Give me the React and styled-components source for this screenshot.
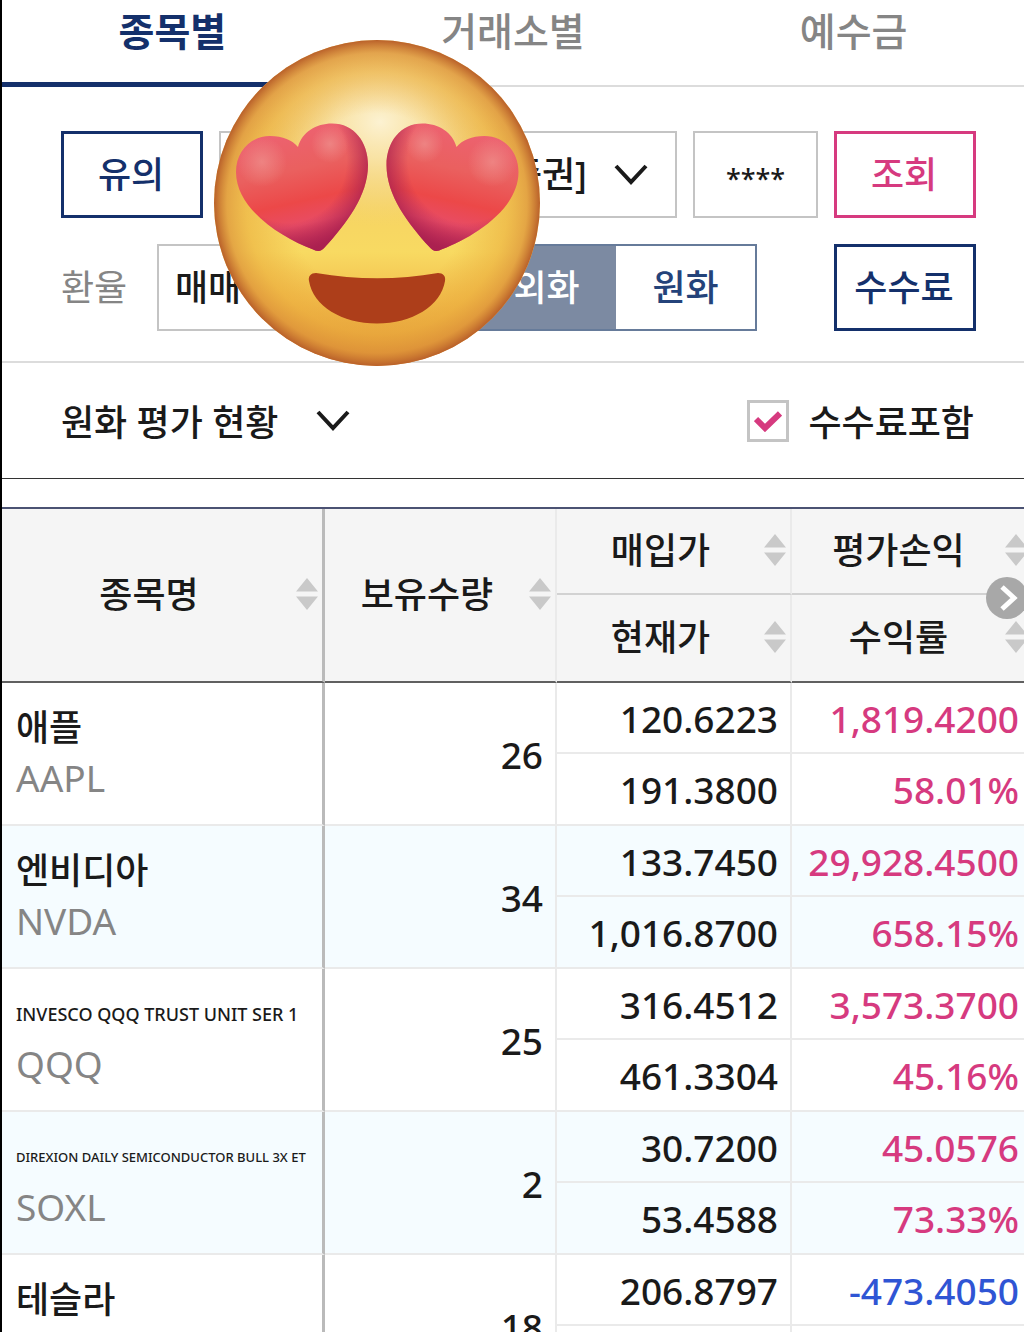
import React, { useState } from "react";
import styled, { createGlobalStyle } from "styled-components";

const navy = "#14306b";
const pink = "#d63a7f";
const blue = "#2f55d4";
const ink = "#1a1a1a";
const muted = "#858585";
const boxLine = "#c4c4c4";
const cellLine = "#eaeaea";

const GlobalStyle = createGlobalStyle`
  *, *::before, *::after { box-sizing: border-box; }
  body {
    margin: 0;
    background: #fff;
  }
  body, button, input, select {
    font-family: "Noto Sans", "Noto Sans CJK KR", sans-serif;
    font-size: 36px;
    font-weight: 500;
    color: ${ink};
  }
`;

const Page = styled.main`
  position: relative;
  height: 100vh;
  overflow: hidden;
  border-left: 2px solid #000;
`;

const Tabs = styled.nav`
  display: grid;
  grid-template-columns: repeat(3, 1fr);
  height: 87px;
  box-shadow: inset 0 -2px #dcdcdc;
`;

const Tab = styled.a`
  padding-top: 4px;
  line-height: 54px;
  text-align: center;
  text-decoration: none;
  font-size: 39px;
  font-weight: ${(p) => (p.$active ? 700 : 500)};
  color: ${(p) => (p.$active ? navy : muted)};
  border-bottom: ${(p) => (p.$active ? `5px solid ${navy}` : "0")};
`;

const Filters = styled.section`
  display: flex;
  flex-direction: column;
  gap: 26px;
  padding: 44px 48px 30px 59px;
  border-bottom: 2px solid #dcdcdc;
`;

const FilterRow = styled.div`
  display: flex;
  align-items: center;
  gap: 16px;
  height: 87px;
`;

const BoxButton = styled.button`
  width: 142px;
  height: 100%;
  padding: 0 2px 4px 0;
  background: #fff;
  border: 3px solid ${(p) => p.$color};
  color: ${(p) => p.$color};
`;

const SelectWrap = styled.div`
  display: grid;
  align-items: center;
  height: 100%;
  flex: ${(p) => (p.$grow ? "1" : "0 0 302px")};

  > * { grid-area: 1 / 1; }
  > svg { justify-self: end; margin-right: 29px; pointer-events: none; }
`;

const Select = styled.select`
  appearance: none;
  width: 100%;
  height: 100%;
  padding: 0 88px 0 16px;
  background: #fff;
  border: 2px solid ${boxLine};
  border-radius: 0;
  text-align-last: ${(p) => (p.$end ? "right" : "left")};
`;

const PinInput = styled.input`
  width: 125px;
  height: 100%;
  padding: 8px 0 0;
  text-align: center;
  font-size: 27px;
  background: #fff;
  border: 2px solid ${boxLine};
`;

const RateLabel = styled.label`
  width: 80px;
  padding-bottom: 4px;
  font-weight: 400;
  color: ${muted};
`;

const Toggle = styled.div`
  display: flex;
  height: 100%;
  margin-right: auto;
  border: 2px solid #667b9a;
`;

const ToggleButton = styled.button`
  width: 139px;
  padding: 0 0 4px;
  border: 0;
  background: ${(p) => (p.$on ? "#7c8aa2" : "#fff")};
  color: ${(p) => (p.$on ? "#fff" : "#24437a")};
`;

const Summary = styled.section`
  display: flex;
  align-items: center;
  justify-content: space-between;
  height: 116px;
  padding: 0 50px 0 59px;
  border-bottom: 1px solid #333;
`;

const SummaryButton = styled.button`
  display: flex;
  align-items: center;
  gap: 38px;
  padding: 0;
  border: 0;
  background: none;
`;

const CheckLabel = styled.label`
  display: flex;
  align-items: center;
  gap: 19px;
`;

const CheckBox = styled.span`
  display: grid;
  place-items: center;

  > * { grid-area: 1 / 1; }
  > svg { pointer-events: none; }

  input {
    appearance: none;
    width: 42px;
    height: 42px;
    margin: 0;
    background: #fff;
    border: 3px solid ${boxLine};
  }
`;

const Holdings = styled.section`
  position: relative;
  margin-top: 28px;
`;

const TableScroll = styled.div`
  overflow-x: auto;
  overflow-y: hidden;
  scrollbar-width: none;
  border-top: 2px solid #4b5273;
`;

const Table = styled.table`
  width: 100%;
  min-width: 1031px;
  table-layout: fixed;
  border-collapse: separate;
  border-spacing: 0;
`;

const Col = styled.col`
  width: ${(p) => p.$width};
`;

const HeadCell = styled.th`
  height: ${(p) => (p.rowSpan === 2 ? "174px" : p.$lower ? "88px" : "86px")};
  padding: 0;
  font-weight: 500;
  background: #f5f5f5;
  border-right: ${(p) => (p.$fixed ? "3px solid #bababa" : `2px solid ${cellLine}`)};
  border-bottom: ${(p) => (p.rowSpan === 2 || p.$lower ? "2px solid #606060" : "2px solid #d2d2d2")};
`;

const SortButton = styled.button`
  display: flex;
  align-items: center;
  width: 100%;
  padding: 0 4px 2px 0;
  border: 0;
  background: none;

  span {
    flex: 1;
    padding-bottom: 4px;
  }
`;

const Cell = styled.td`
  height: ${(p) => (p.rowSpan === 2 ? "143px" : p.$lower ? "72px" : "71px")};
  padding: 2px 12px 0 0;
  text-align: right;
  font-size: 37px;
  line-height: 52px;
  white-space: nowrap;
  color: ${(p) => p.$color || ink};
  background: ${(p) => (p.$tint ? "#f5fcff" : "#fff")};
  border-right: 2px solid ${cellLine};
  border-bottom: 2px solid ${cellLine};
`;

const NameCell = styled(Cell)`
  padding: 16px 0 0 14px;
  text-align: left;
  vertical-align: top;
  border-right: 3px solid #bababa;
`;

const StockName = styled.div`
  height: 58px;
  line-height: 58px;
  font-size: ${(p) => p.$size}px;
`;

const Ticker = styled.div`
  line-height: 42px;
  font-weight: 400;
  color: ${muted};
`;

const NextButton = styled.button`
  position: absolute;
  top: 70px;
  right: -4px;
  width: 42px;
  height: 42px;
  padding: 0;
  border: 0;
  border-radius: 50%;
  background: #a8a8a8;

  svg { display: block; }
`;

const Sticker = styled.svg`
  position: absolute;
  left: 212px;
  top: 40px;
  width: 326px;
  height: 326px;
`;

const Chevron = () => (
  <svg width="34" height="22" viewBox="0 0 34 22" fill="none" aria-hidden="true">
    <path d="M2 2 17 18 32 2" stroke={ink} strokeWidth="4" />
  </svg>
);

const SortIcon = () => (
  <svg width="22" height="32" viewBox="0 0 22 32" fill="#c9c9c9" aria-hidden="true">
    <path d="M11 0 22 13.5H0ZM11 32 0 18.5H22Z" />
  </svg>
);

const HEART =
  "M298 147C302 132 316 123.500 332 123.500C354 123.500 368 142 368 165C368 196 346 224 325 247C321 251.500 318 252 312 249C283 238 236 210 236 172C236 151 251 136 270 136C283 136 292 140 298 147Z";

const HeartEyes = () => (
  <Sticker viewBox="214 40 326 326" role="img" aria-label="하트 눈 이모지">
    <defs>
      <linearGradient id="skin" x1="0" y1="0" x2="0" y2="1">
        <stop offset="0" stopColor="#eec66a" />
        <stop offset=".35" stopColor="#f4cc62" />
        <stop offset=".65" stopColor="#f8da62" />
        <stop offset=".8" stopColor="#f2bd4c" />
        <stop offset="1" stopColor="#df8f34" />
      </linearGradient>
      <radialGradient id="rim" gradientUnits="userSpaceOnUse" cx="377" cy="203" r="163">
        <stop offset=".55" stopColor="#e9a93a" stopOpacity="0" />
        <stop offset=".8" stopColor="#e9a93a" stopOpacity=".5" />
        <stop offset=".92" stopColor="#dc9138" stopOpacity=".7" />
        <stop offset="1" stopColor="#b9602a" />
      </radialGradient>
      <radialGradient
        id="glow"
        gradientUnits="userSpaceOnUse"
        cx="0"
        cy="0"
        r="1"
        gradientTransform="translate(380 122) scale(130 105)"
      >
        <stop offset="0" stopColor="#fcf2d2" />
        <stop offset=".35" stopColor="#fae8b4" stopOpacity=".8" />
        <stop offset=".7" stopColor="#f6dc94" stopOpacity=".45" />
        <stop offset="1" stopColor="#f4d272" stopOpacity="0" />
      </radialGradient>
      <linearGradient id="heart" gradientUnits="userSpaceOnUse" x1="290" y1="125" x2="318" y2="250">
        <stop offset="0" stopColor="#ed6272" />
        <stop offset=".35" stopColor="#ea605f" />
        <stop offset=".6" stopColor="#ec4848" />
        <stop offset=".78" stopColor="#e84c65" />
        <stop offset="1" stopColor="#c02a58" />
      </linearGradient>
      <radialGradient
        id="edge"
        gradientUnits="userSpaceOnUse"
        cx="0"
        cy="0"
        r="1"
        gradientTransform="translate(288 160) scale(86 92)"
      >
        <stop offset=".68" stopColor="#a81f4f" stopOpacity="0" />
        <stop offset=".88" stopColor="#a81f4f" stopOpacity=".55" />
        <stop offset="1" stopColor="#a81f4f" stopOpacity=".9" />
      </radialGradient>
      <radialGradient id="shine">
        <stop offset="0" stopColor="#f09a95" stopOpacity=".6" />
        <stop offset="1" stopColor="#f09a95" stopOpacity="0" />
      </radialGradient>
      <g id="eye">
        <path d={HEART} fill="url(#heart)" />
        <path d={HEART} fill="url(#edge)" />
        <circle cx="330" cy="144" r="19" fill="url(#shine)" />
        <circle cx="262" cy="162" r="25" fill="url(#shine)" />
      </g>
    </defs>
    <circle cx="377" cy="203" r="163" fill="url(#skin)" />
    <circle cx="377" cy="203" r="163" fill="url(#glow)" />
    <circle cx="377" cy="203" r="163" fill="url(#rim)" />
    <use href="#eye" />
    <use href="#eye" transform="translate(754.500 0) scale(-1 1)" />
    <path
      d="M316 273C357 280 398 280 438 273C443 273 446 276 445 281C441 306 412 323.500 377 323.500C342 323.500 313 306 309 281C308 276 311 273 316 273Z"
      fill="#ad3e1a"
    />
  </Sticker>
);

const tabs = ["종목별", "거래소별", "예수금"];

const holdings = [
  { name: "애플", ticker: "AAPL", qty: "26", buy: "120.6223", now: "191.3800", profit: "1,819.4200", rate: "58.01%" },
  { name: "엔비디아", ticker: "NVDA", qty: "34", buy: "133.7450", now: "1,016.8700", profit: "29,928.4500", rate: "658.15%" },
  { name: "INVESCO QQQ TRUST UNIT SER 1", size: 18, ticker: "QQQ", qty: "25", buy: "316.4512", now: "461.3304", profit: "3,573.3700", rate: "45.16%" },
  { name: "DIREXION DAILY SEMICONDUCTOR BULL 3X ET", size: 13, ticker: "SOXL", qty: "2", buy: "30.7200", now: "53.4588", profit: "45.0576", rate: "73.33%" },
  { name: "테슬라", qty: "18", buy: "206.8797", profit: "-473.4050" },
];

const Sortable = ({ children, ...cell }) => (
  <HeadCell {...cell}>
    <SortButton type="button">
      <span>{children}</span>
      <SortIcon />
    </SortButton>
  </HeadCell>
);

const Holding = ({ item, tint }) => {
  const color = item.profit.startsWith("-") ? blue : pink;
  return (
    <>
      <tr>
        <NameCell rowSpan={2} $tint={tint}>
          <StockName $size={item.size || 36}>{item.name}</StockName>
          <Ticker>{item.ticker}</Ticker>
        </NameCell>
        <Cell rowSpan={2} $tint={tint}>{item.qty}</Cell>
        <Cell $tint={tint}>{item.buy}</Cell>
        <Cell $tint={tint} $color={color}>{item.profit}</Cell>
      </tr>
      <tr>
        <Cell $lower $tint={tint}>{item.now}</Cell>
        <Cell $lower $tint={tint} $color={color}>{item.rate}</Cell>
      </tr>
    </>
  );
};

export default function App() {
  const [won, setWon] = useState(false);
  const [withFee, setWithFee] = useState(true);

  return (
    <Page>
      <GlobalStyle />
      <Tabs>
        {tabs.map((tab, i) => (
          <Tab key={tab} href="#" $active={i === 0}>{tab}</Tab>
        ))}
      </Tabs>

      <Filters>
        <FilterRow>
          <BoxButton type="button" $color={navy}>유의</BoxButton>
          <SelectWrap $grow>
            <Select $end aria-label="계좌">
              <option>증권]</option>
            </Select>
            <Chevron />
          </SelectWrap>
          <PinInput aria-label="비밀번호" defaultValue="****" />
          <BoxButton type="button" $color={pink}>조회</BoxButton>
        </FilterRow>
        <FilterRow>
          <RateLabel htmlFor="rate">환율</RateLabel>
          <SelectWrap>
            <Select id="rate">
              <option>매매</option>
            </Select>
          </SelectWrap>
          <Toggle>
            <ToggleButton type="button" $on={!won} onClick={() => setWon(false)}>외화</ToggleButton>
            <ToggleButton type="button" $on={won} onClick={() => setWon(true)}>원화</ToggleButton>
          </Toggle>
          <BoxButton type="button" $color={navy}>수수료</BoxButton>
        </FilterRow>
      </Filters>

      <Summary>
        <SummaryButton type="button">
          원화 평가 현황
          <Chevron />
        </SummaryButton>
        <CheckLabel>
          <CheckBox>
            <input type="checkbox" checked={withFee} onChange={(e) => setWithFee(e.target.checked)} />
            {withFee && (
              <svg width="28" height="22" viewBox="0 0 28 22" fill="none" aria-hidden="true">
                <path d="M2 9 11 18 26 3.500" stroke={pink} strokeWidth="6" />
              </svg>
            )}
          </CheckBox>
          수수료포함
        </CheckLabel>
      </Summary>

      <Holdings>
        <TableScroll>
          <Table>
            <colgroup>
              <Col $width="323px" />
              <Col $width="232px" />
              <Col $width="235px" />
              <Col $width="auto" />
            </colgroup>
            <thead>
              <tr>
                <Sortable rowSpan={2} $fixed>종목명</Sortable>
                <Sortable rowSpan={2}>보유수량</Sortable>
                <Sortable>매입가</Sortable>
                <Sortable>평가손익</Sortable>
              </tr>
              <tr>
                <Sortable $lower>현재가</Sortable>
                <Sortable $lower>수익률</Sortable>
              </tr>
            </thead>
            <tbody>
              {holdings.map((item, i) => (
                <Holding key={item.name} item={item} tint={i % 2 === 1} />
              ))}
            </tbody>
          </Table>
        </TableScroll>
        <NextButton type="button" aria-label="다음">
          <svg width="42" height="42" viewBox="0 0 42 42" fill="none" aria-hidden="true">
            <path d="M16 10 28 21 16 32" stroke="#fff" strokeWidth="5" />
          </svg>
        </NextButton>
      </Holdings>

      <HeartEyes />
    </Page>
  );
}
